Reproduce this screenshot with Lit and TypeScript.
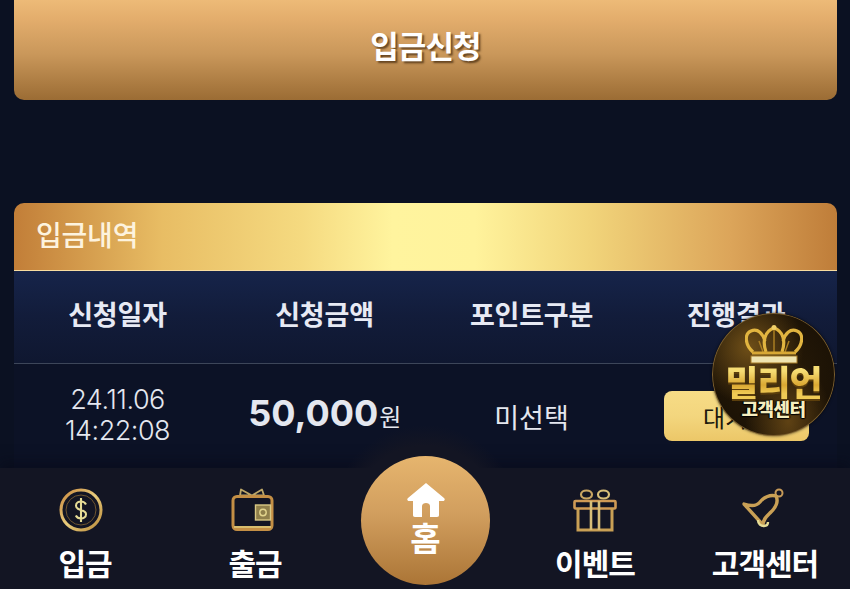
import { LitElement, html, css, svg } from "lit";
import { customElement } from "lit/decorators.js";

const gold = svg`<defs>
<linearGradient id="g" x1="0" y1="0" x2="1" y2="1"><stop offset="0" stop-color="#c9893f"/><stop offset=".5" stop-color="#e9cc7c"/><stop offset="1" stop-color="#b98a3a"/></linearGradient></defs>`;

const coin = html`<svg class="i-coin" width="44" height="44" viewBox="0 0 44 44" fill="none">${gold}
<circle cx="22" cy="22" r="20" stroke="url(#g)" stroke-width="3"/>
<circle cx="22" cy="22" r="15" stroke="#6f5530" stroke-width="1"/>
<path d="M27 16.500c-1-2-3-3-5-3s-5 1.200-5 4.200 2.600 3.600 5 4.300 5 1.400 5 4.300-2.600 4.200-5 4.200-4.200-1-5.200-3M22 10v24" stroke="#e6dc96" stroke-width="2.100"/>
</svg>`;

const wallet = html`<svg class="i-wallet" width="44" height="44" viewBox="0 0 44 44" fill="none">
<path d="M9 7.500L10 1.500 21 7.500ZM21 7.500L31 1.500 33 7.500Z" stroke="#bda768" stroke-width="1.800" stroke-linejoin="round"/>
<rect x="2" y="8.500" width="39" height="33" rx="4" stroke="#c48f45" stroke-width="3"/>
<path d="M3 39h37" stroke="#d9bd6d" stroke-width="2"/>
<rect x="24.500" y="17" width="15" height="15" fill="#8f7f4b" stroke="#d9c884" stroke-width="1.400"/>
<circle cx="32" cy="24.500" r="3.200" stroke="#e3d58e" stroke-width="1.400"/>
</svg>`;

const gift = html`<svg class="i-gift" width="44" height="44" viewBox="0 0 44 44" fill="none">
<ellipse cx="13.500" cy="6.500" rx="5.500" ry="4" stroke="#c9a662" stroke-width="2.200"/>
<ellipse cx="30.500" cy="6.500" rx="5.500" ry="4" stroke="#d8bf78" stroke-width="2.200"/>
<rect x="1.500" y="13" width="41" height="7.500" rx="1" stroke="#cf9a55" stroke-width="2.600"/>
<path d="M5 20v22h34V20" stroke="#c9a055" stroke-width="3"/>
<path d="M18 13v29M26 13v29" stroke="#d8bf78" stroke-width="2.600"/>
</svg>`;

const bell = html`<svg class="i-bell" width="44" height="44" viewBox="0 0 44 44" fill="none">
<circle cx="37" cy="5" r="3.500" stroke="#c69a58" stroke-width="2"/>
<path d="M34 8C28 6 21 10 18 14 14 19 8 18 2 16L21 37C21 31 25 28 29 24 34 19 37 14 34 8Z" stroke="#c9a055" stroke-width="3.400" stroke-linejoin="round"/>
<path d="M16 32c0 4 3 6 6 6s4-2 4-4" stroke="#e6dc96" stroke-width="2.400"/>
</svg>`;

const crown = html`<svg class="crown" width="58" height="39" viewBox="0 0 58 39" fill="none">
<path d="M8 27C0 20-1 9 6 6c7-3 12 3 14 10M29 3C20 6 17 16 21 27M29 3c9 3 12 13 8 24M50 27C58 20 59 9 52 6c-7-3-12 3-14 10" stroke="#e2b540" stroke-width="3.200"/>
<path d="M29 3v24M14 16l4 11M44 16l-4 11" stroke="#a97d22" stroke-width="1.500"/>
<path d="M7 28h44" stroke="#d8a835" stroke-width="3"/>
<rect x="6" y="31" width="46" height="7" fill="#efe4b0" stroke="#a67a24"/>
<circle cx="29" cy="2.500" r="2.500" fill="#f0cf68"/>
</svg>`;

@customElement("app-root")
export class AppRoot extends LitElement {
  static styles = css`
    :host { display: block; width: 850px; height: 589px; overflow: hidden; background: #0b1122;
      font-family: "Noto Sans CJK KR", "Noto Sans", sans-serif; color: #eef0f6; position: relative; }
    .page { padding: 0 13px 0 14px; display: flex; flex-direction: column; }
    .apply { height: 101px; margin-top: -1px; border-radius: 0 0 10px 10px;
      background: linear-gradient(180deg, #edbb78 0%, #e3ad6c 20%, #c9975a 55%, #9b6c34 100%);
      display: flex; align-items: center; justify-content: center; padding-bottom: 11px; box-sizing: border-box;
      font-size: 31px; font-weight: 700; letter-spacing: -.9px; color: #fff; text-shadow: 2px 2px 2px rgba(60,35,10,.7); }
    .panel { margin-top: 103px; }
    .title { height: 68px; border-radius: 10px 10px 0 0; box-sizing: border-box; padding: 0 0 5px 22px;
      display: flex; align-items: center; font-size: 28px; font-weight: 500; letter-spacing: -.2px; color: #fdf3de;
      background: linear-gradient(90deg, #c27e38 0%, #e8bd64 18%, #f5da80 35%, #fff49e 46%, #fff39c 56%, #f1d47a 70%, #dca55a 87%, #bf7d39 100%);
      border-bottom: 1.500px solid #f7dca0; }
    .head, .row { display: grid; grid-template-columns: 207px 207px 207px 1fr; align-items: center; text-align: center; }
    .head { height: 93px; box-sizing: border-box; padding-bottom: 7px; font-size: 27px; font-weight: 700; letter-spacing: -.2px; color: #e7eaf4;
      border-bottom: 1px solid #3d4659; background: linear-gradient(180deg, #16244a 0%, #121c3a 50%, #0f1730 100%); }
    .row { height: 104px; font-size: 27px; color: #e4e7ef; background: #0c1226; }
    .date { font-family: "Inter", "DejaVu Sans", sans-serif; line-height: 31px; font-size: 27px; font-weight: 300; letter-spacing: -.5px; margin-top: -3px; }
    .amt { font-size: 24px; letter-spacing: -.5px; display: flex; align-items: baseline; justify-content: center; padding-bottom: 7px; }
    .amt b { font-family: "Inter", "DejaVu Sans", sans-serif; font-size: 36px; font-weight: 700; letter-spacing: 0; margin-right: 1px; }
    .btn { justify-self: center; width: 145px; height: 50px; border-radius: 8px; color: #20190d; font-size: 24px;
      background: linear-gradient(180deg, #f7dc86 0%, #f3d67e 50%, #ecc768 100%);
      display: flex; align-items: center; justify-content: center; }
    nav { position: absolute; left: 0; right: 0; bottom: 0; height: 121px; background: #131523;
      box-shadow: 0 -6px 12px rgba(8,10,24,.55); display: grid; grid-template-columns: 170px 170px 170px 170px 170px; }
    .tab { display: flex; flex-direction: column; align-items: center; padding-top: 20px; box-sizing: border-box;
      font-size: 30px; font-weight: 700; letter-spacing: -1px; color: #fff; line-height: 40px; gap: 10px; }
    .tab svg { display: block; }
    .i-coin { margin-left: -8px; }
    .i-wallet { margin-left: -4px; }
    .i-bell { margin-left: -3px; }
    .homewrap { position: relative; }
    .notch { position: absolute; left: 50%; top: -43px; width: 190px; height: 190px; margin-left: -95px; border-radius: 50%;
      background: radial-gradient(circle closest-side, #131523 78%, rgba(19,21,35,0) 100%); }
    .home { position: absolute; left: 50%; top: -12px; margin-left: -64px; width: 129px; height: 129px; border-radius: 50%;
      background: linear-gradient(180deg, #e6b56e 0%, #d19e5e 45%, #ab7536 100%);
      display: flex; flex-direction: column; align-items: center; padding-top: 27px; box-sizing: border-box;
      font-size: 33px; font-weight: 700; color: #fff; line-height: 40px; }
    .badge { position: absolute; left: 712px; top: 313px; width: 123px; height: 123px; border-radius: 50%;
      background: radial-gradient(ellipse at 30% 28%, #6f4f18 0%, rgba(111,79,24,0) 45%),
        radial-gradient(ellipse at 62% 88%, #5f4214 0%, rgba(95,66,20,0) 40%),
        radial-gradient(circle at 50% 50%, #2a1c08 0%, #1a1105 80%, #0d0803 100%);
      box-shadow: inset 0 0 0 1px #7a5e2e, 0 0 3px rgba(0,0,0,.7);
      display: flex; flex-direction: column; align-items: center; padding-top: 12px; box-sizing: border-box; }
    .crown { display: block; }
    .brand { font-size: 36px; line-height: 35px; font-weight: 900; letter-spacing: -1px;
      color: transparent; background: linear-gradient(180deg, #f6dd74 20%, #dba832 60%, #f0cb55 85%);
      -webkit-background-clip: text; background-clip: text;
      filter: drop-shadow(0 2px 0 #5c3f0c); }
    .sub { font-size: 18px; line-height: 18px; font-weight: 900; letter-spacing: -.5px; color: #f6eebe;
      text-shadow: 0 1px 1px #000, 0 0 2px #000, 1px 0 1px #000, -1px 0 1px #000; }
  `;

  render() {
    return html`
      <div class="page">
        <div class="apply">입금신청</div>
        <section class="panel">
          <div class="title">입금내역</div>
          <div class="head"><div>신청일자</div><div>신청금액</div><div>포인트구분</div><div>진행결과</div></div>
          <div class="row">
            <div class="date">24.11.06<br />14:22:08</div>
            <div class="amt"><b>50,000</b>원</div>
            <div>미선택</div>
            <div class="btn">대기중</div>
          </div>
        </section>
      </div>
      <div class="badge">
        ${crown}
        <div class="brand">밀리언</div>
        <div class="sub">고객센터</div>
      </div>
      <nav>
        <div class="tab">${coin}<span>입금</span></div>
        <div class="tab">${wallet}<span>출금</span></div>
        <div class="homewrap">
          <div class="notch"></div>
          <div class="home">
            <svg width="38" height="34" viewBox="0 0 38 34"><path d="M19 0L1 15c-1.500 1.500-.5 3 1 3h4v14c0 1 .5 2 2 2h7V23c0-2 2-3 4-3s4 1 4 3v11h7c1.500 0 2-1 2-2V18h4c1.500 0 2.500-1.500 1-3z" fill="#fff"/></svg>
            <span>홈</span>
          </div>
        </div>
        <div class="tab">${gift}<span>이벤트</span></div>
        <div class="tab">${bell}<span>고객센터</span></div>
      </nav>
    `;
  }
}
